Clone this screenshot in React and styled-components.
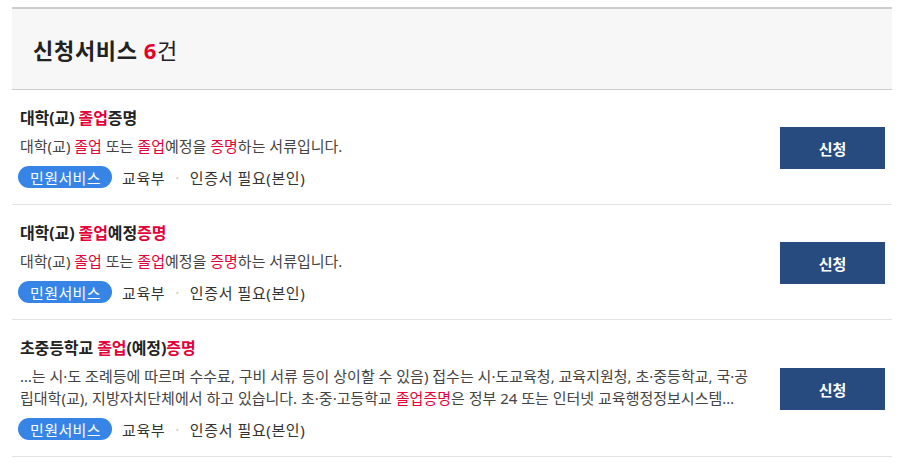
import styled, { createGlobalStyle } from "styled-components";

const GlobalStyle = createGlobalStyle`
  body {
    margin: 0;
    background: #fff;
    font-family: "Noto Sans", "Noto Sans CJK KR", sans-serif;
  }
`;

const Wrapper = styled.div`
    width: 880px;
    margin: 7px 0 0 12px;
`;

const Header = styled.div`
    height: 80px;
    background-color: #f7f7f7;
    border-top: 2px solid #cdcdcd;
    border-bottom: 1px solid #cdcdcd;
    display: flex;
    align-items: center;
    padding-left: 21px;
`;

const HeaderTitle = styled.h2`
    margin: 0;
    font-size: 22px;
    font-weight: 700;
    color: #222;
    letter-spacing: 0.7px;

    em {
        font-style: normal;
        color: #e5002b;
        margin-left: 6px;
    }

    span {
        font-weight: 400;
    }
`;

const Item = styled.div`
    display: flex;
    align-items: center;
    border-bottom: 1px solid #e3e3e3;
    padding: 18px 7px 16px 8px;
`;

const Info = styled.div`
    flex: 1;
    min-width: 0;
    padding-right: 24px;
`;

const Title = styled.div`
    font-size: 16px;
    font-weight: 700;
    line-height: 20px;
    color: #222;
    letter-spacing: -0.1px;
`;

const Desc = styled.p`
    margin: 7px 0 0 0;
    font-size: 15px;
    line-height: 22px;
    color: #444;
    display: -webkit-box;
    -webkit-line-clamp: 2;
    -webkit-box-orient: vertical;
    overflow: hidden;
`;

const Mark = styled.span`
    color: #e5003a;
`;

const Meta = styled.div`
    display: flex;
    align-items: center;
    margin-top: 9px;
    font-size: 15px;
    color: #333;
    height: 22px;
    letter-spacing: 0.6px;
`;

const Pill = styled.span`
    display: inline-flex;
    align-items: center;
    height: 22px;
    padding: 0 11px 0 12px;
    border-radius: 11px;
    background-color: #3685e6;
    color: #fff;
    letter-spacing: 0.4px;
    margin: 0 10px 0 -2px;
`;

const Dot = styled.span`
    color: #c8c8c8;
    margin: 0 10px;
`;

const ApplyButton = styled.button`
    width: 105px;
    height: 42px;
    border: none;
    background-color: #284b7f;
    color: #fff;
    font-family: inherit;
    font-size: 15px;
    font-weight: 700;
    cursor: pointer;
    flex-shrink: 0;
`;

const items = [
    {
        title: <>대학(교) <Mark>졸업</Mark>증명</>,
        desc: <>대학(교) <Mark>졸업</Mark> 또는 <Mark>졸업</Mark>예정을 <Mark>증명</Mark>하는 서류입니다.</>,
    },
    {
        title: <>대학(교) <Mark>졸업</Mark>예정<Mark>증명</Mark></>,
        desc: <>대학(교) <Mark>졸업</Mark> 또는 <Mark>졸업</Mark>예정을 <Mark>증명</Mark>하는 서류입니다.</>,
    },
    {
        title: <>초중등학교 <Mark>졸업</Mark>(예정)<Mark>증명</Mark></>,
        desc: <>…는 시·도 조례등에 따르며 수수료, 구비 서류 등이 상이할 수 있음) 접수는 시·도교육청, 교육지원청, 초·중등학교, 국·공립대학(교), 지방자치단체에서 하고 있습니다. 초·중·고등학교 <Mark>졸업증명</Mark>은 정부 24 또는 인터넷 교육행정정보시스템(www.neis.go.kr)에서 발급받을 수 있습니다.</>,
    },
];

function App() {
    return (
        <Wrapper>
            <GlobalStyle />
            <Header>
                <HeaderTitle>신청서비스<em>6</em><span>건</span></HeaderTitle>
            </Header>
            {items.map((item, i) => (
                <Item key={i}>
                    <Info>
                        <Title>{item.title}</Title>
                        <Desc>{item.desc}</Desc>
                        <Meta>
                            <Pill>민원서비스</Pill>
                            교육부
                            <Dot>·</Dot>
                            인증서 필요(본인)
                        </Meta>
                    </Info>
                    <ApplyButton>신청</ApplyButton>
                </Item>
            ))}
        </Wrapper>
    );
}

export default App;
